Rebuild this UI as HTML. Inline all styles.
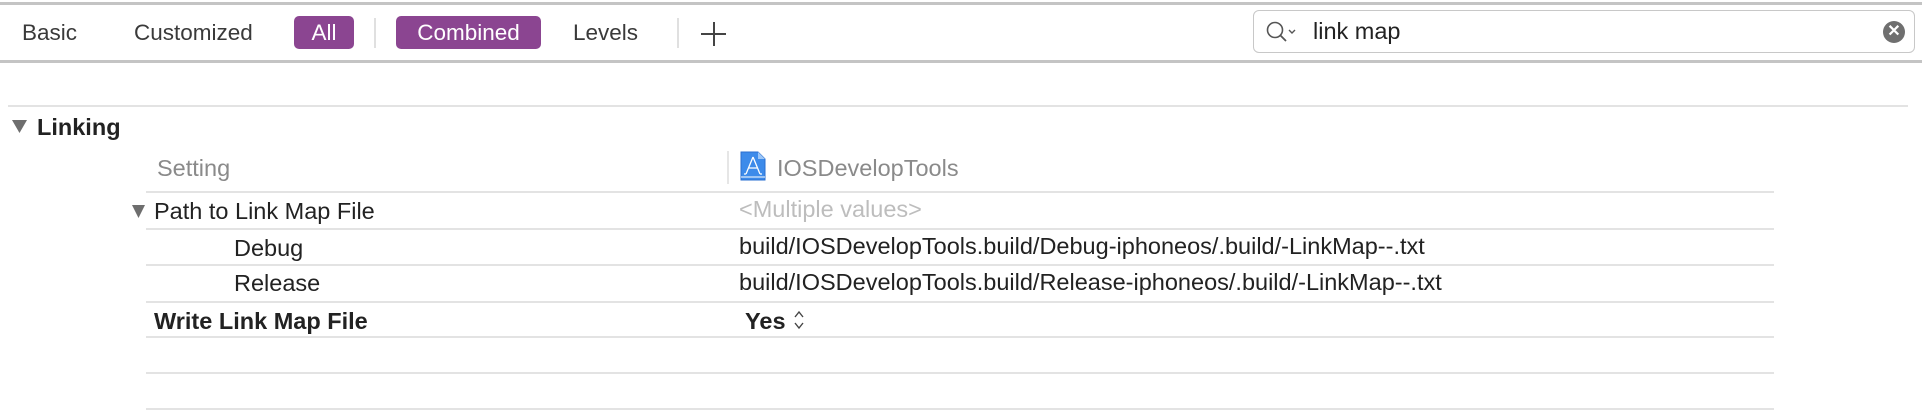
<!DOCTYPE html>
<html><head><meta charset="utf-8"><style>
*{margin:0;padding:0;box-sizing:border-box}
body{width:1922px;height:412px;background:#fff;position:relative;overflow:hidden;font-family:"Liberation Sans",sans-serif;font-size:23.5px;color:#222}
.a{position:absolute;white-space:nowrap}
.hl{position:absolute;height:2px;background:#e3e3e3}
.tab{position:absolute;top:16px;height:33px;line-height:33px;color:#3a3a3a;font-size:22.5px}
.pill{background:#8b4591;color:#fff;border-radius:5px;text-align:center}
.vs{position:absolute;width:2px;background:#e0e0e0}
.row{position:absolute;line-height:28px;white-space:nowrap}
</style></head><body>
<div class="hl" style="top:2px;left:0;width:1922px;height:3px;background:#c4c4c4"></div>
<div class="hl" style="top:60px;left:0;width:1922px;height:3px;background:#c4c4c4"></div>
<div class="tab" style="left:22px">Basic</div>
<div class="tab" style="left:134px">Customized</div>
<div class="tab pill" style="left:294px;width:60px">All</div>
<div class="vs" style="left:374px;top:18px;height:30px"></div>
<div class="tab pill" style="left:396px;width:145px">Combined</div>
<div class="tab" style="left:573px">Levels</div>
<div class="vs" style="left:677px;top:18px;height:30px"></div>
<div class="a" style="left:701px;top:22px;width:26px;height:24px">
<div style="position:absolute;left:12px;top:0;width:1.5px;height:24px;background:#444"></div>
<div style="position:absolute;left:0;top:11px;width:25px;height:1.5px;background:#444"></div></div>
<div class="a" style="left:1253px;top:10px;width:662px;height:43px;border:1px solid #c8c8c8;border-radius:6px"></div>
<svg class="a" style="left:1265px;top:20px" width="34" height="26" viewBox="0 0 34 26"><circle cx="10" cy="10" r="7.5" fill="none" stroke="#555" stroke-width="1.6"/><path d="M15 15l6 6" stroke="#555" stroke-width="1.8"/><path d="M24 10l3 3 3-3" fill="none" stroke="#555" stroke-width="1.4"/></svg>
<div class="a" style="left:1313px;top:18px;font-size:23.5px;color:#222">link map</div>
<div class="a" style="left:1883px;top:21px;width:22px;height:22px;border-radius:50%;background:#6f6f6f;color:#fff;text-align:center;line-height:21px;font-size:16px;font-weight:bold">✕</div>
<div class="hl" style="top:105px;left:8px;width:1900px"></div>
<svg class="a" style="left:12px;top:120px" width="16" height="14"><path d="M0 0h15L7.5 13z" fill="#6e6e6e"/></svg>
<div class="row" style="left:37px;top:113px;font-weight:bold;font-size:23.5px;color:#222">Linking</div>
<div class="row" style="left:157px;top:154px;color:#8a8a8a">Setting</div>
<div class="vs" style="left:727px;top:151px;height:33px;background:#e6e6e6"></div>
<svg class="a" style="left:740px;top:151px" width="27" height="30" viewBox="0 0 27 30"><path d="M1 1h17l7 7v21H1z" fill="#3d8bea" stroke="#2a6fd0"/><path d="M18 1v7h7" fill="#9cc6f7"/><path d="M13 6l-7 17M13 6l7 17M8 17h10M6 23h-2M20 23h2" stroke="#fff" stroke-width="1.3" fill="none"/><path d="M1 26h24" stroke="#fff"/></svg>
<div class="row" style="left:777px;top:154px;color:#8a8a8a">IOSDevelopTools</div>
<div class="hl" style="top:191px;left:146px;width:1628px"></div>
<svg class="a" style="left:132px;top:205px" width="14" height="14"><path d="M0 0h13L6.5 13z" fill="#6e6e6e"/></svg>
<div class="row" style="left:154px;top:197px">Path to Link Map File</div>
<div class="row" style="left:739px;top:195px;color:#bdbdbd">&lt;Multiple values&gt;</div>
<div class="hl" style="top:228px;left:146px;width:1628px"></div>
<div class="row" style="left:234px;top:234px">Debug</div>
<div class="row" style="left:739px;top:232px">build/IOSDevelopTools.build/Debug-iphoneos/.build/-LinkMap--.txt</div>
<div class="hl" style="top:264px;left:146px;width:1628px"></div>
<div class="row" style="left:234px;top:269px">Release</div>
<div class="row" style="left:739px;top:268px">build/IOSDevelopTools.build/Release-iphoneos/.build/-LinkMap--.txt</div>
<div class="hl" style="top:301px;left:146px;width:1628px"></div>
<div class="row" style="left:154px;top:307px;font-weight:bold">Write Link Map File</div>
<div class="row" style="left:745px;top:307px;font-weight:bold">Yes</div>
<svg class="a" style="left:793px;top:309px" width="12" height="22"><path d="M2 8l4-5 4 5M2 14l4 5 4-5" fill="none" stroke="#444" stroke-width="1.4"/></svg>
<div class="hl" style="top:336px;left:146px;width:1628px"></div>
<div class="hl" style="top:372px;left:146px;width:1628px"></div>
<div class="hl" style="top:408px;left:146px;width:1628px"></div>
</body></html>
